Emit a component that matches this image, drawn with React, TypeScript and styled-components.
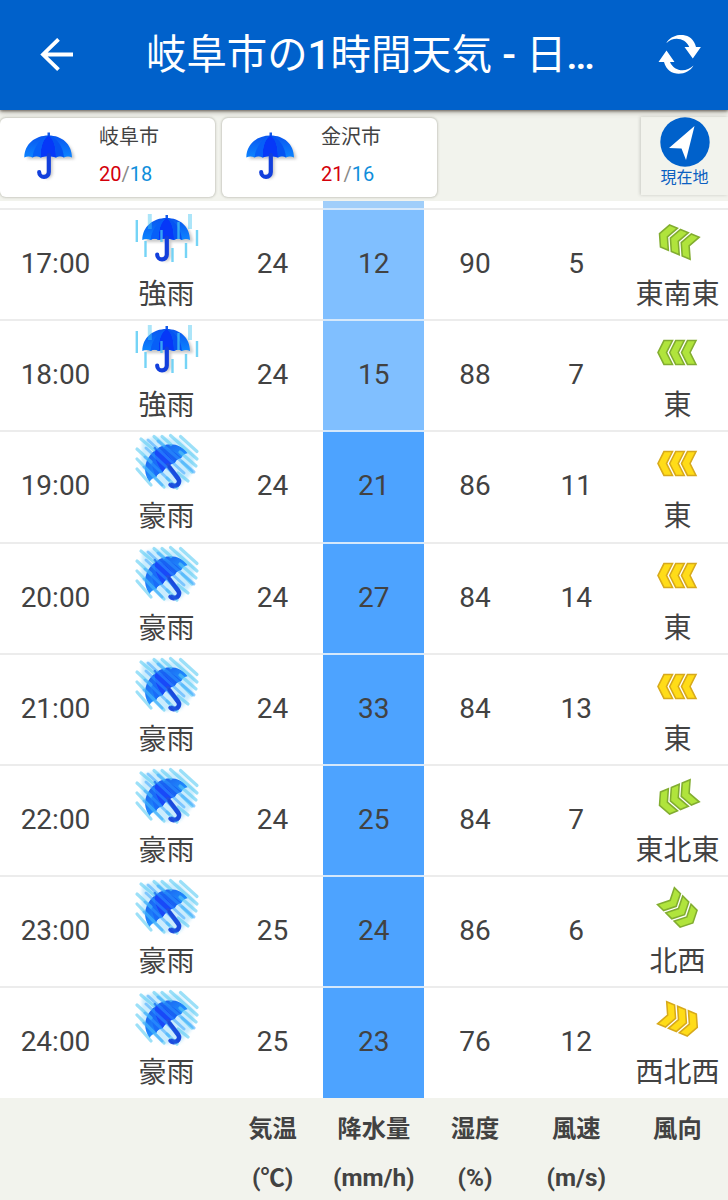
import React from "react";
import styled, { createGlobalStyle } from "styled-components";

const GlobalStyle = createGlobalStyle`
  * { box-sizing: border-box; }
  body {
    margin: 0;
    background: #f2f3ed;
    color: #424242;
    font-family: Roboto, "Noto Sans CJK JP", sans-serif;
  }
`;

const Page = styled.div`
  display: flex;
  flex-direction: column;
  width: 728px;
  height: 1200px;
  overflow: hidden;
`;

const TopBar = styled.header`
  display: flex;
  align-items: center;
  flex: none;
  height: 110px;
  padding: 0 26px 0 39px;
  background: #0061cb;
  color: #fff;
  box-shadow: 0 1px 3px rgba(60, 50, 40, 0.7), 0 2px 6px rgba(60, 50, 40, 0.3);
  z-index: 1;

  svg { flex: none; }
`;

const Title = styled.h1`
  flex: 1;
  margin: 2px 0 0 72px;
  font-size: 40.4px;
  line-height: 60px;
  font-weight: 400;
  white-space: nowrap;

  b { font-weight: 500; }
`;

const CityStrip = styled.nav`
  display: flex;
  flex: none;
  gap: 7px;
  height: 91px;
  padding-top: 8px;
`;

const CityCard = styled.section`
  display: flex;
  width: 215px;
  height: 79px;
  padding: 3px 0 0 21px;
  gap: 20px;
  border-radius: 6px;
  background: #fff;
  box-shadow: 0 0 2px 1px rgba(120, 120, 105, 0.3);

  > svg { margin-top: 10px; }
`;

const CityInfo = styled.div`
  font-size: 20px;
  line-height: 32px;
`;

const Temps = styled.div`
  margin-top: 7px;
  line-height: 28px;
  color: #888;
`;

const High = styled.span`color: #d4000b;`;
const Low = styled.span`color: #0f8edb;`;

const LocateButton = styled.button`
  display: flex;
  flex-direction: column;
  align-items: center;
  width: 87px;
  height: 78px;
  margin: -1px 0 0 auto;
  padding: 0;
  border: 0;
  background: #f2f3ed;
  color: #0b60c1;
  font: 400 16px/22px Roboto, "Noto Sans CJK JP", sans-serif;
  box-shadow: -1px 0 3px rgba(90, 90, 80, 0.26);
`;

const columns = "111px 111px repeat(5, 1fr)";

const PreviousRow = styled.div`
  display: grid;
  grid-template-columns: ${columns};
  flex: none;
  height: 7px;
  background: #fff;

  span { grid-column: 4; background: #a0cefa; }
`;

const Row = styled.div`
  display: grid;
  grid-template-columns: ${columns};
  flex: none;
  height: 111.2px;
  background: #fff;
  font-size: 28px;
  text-align: center;
`;

const Cell = styled.div<{ $fill?: string }>`
  display: flex;
  align-items: center;
  justify-content: center;
  padding-bottom: 3px;
  border-top: 2px solid #ececec;
  background: ${(p) => p.$fill ?? "#fff"};
  ${(p) => p.$fill && "border-top-color: #d5e8fb;"}
`;

const IconCell = styled(Cell)`
  flex-direction: column;
  justify-content: flex-start;
  white-space: nowrap;
  line-height: 45px;
`;

const IconBox = styled.div`
  display: flex;
  align-items: center;
  justify-content: center;
  flex: none;
  width: 66px;
  height: 62px;
`;

const Units = styled.footer`
  display: grid;
  grid-template-columns: ${columns};
  flex: 1;
  background: #f2f3ed;
  font-size: 24.3px;
  font-weight: 700;
  line-height: 49px;
  text-align: center;
`;

const Unit = styled.div`
  padding-top: 6px;
  white-space: nowrap;

  span { display: block; }
`;

const Canopy = () => (
  <g>
    <path d="M24 1.500h2.500v5H24z" fill="#155be8" />
    <path d="M.8 26.500C1 13 11.500 4.500 25 4.500S48.300 13 48.500 26.500q-4-2-8 0-4-2.500-8 0-8-3-15.500 0-4-2.500-8 0-4-2-8.200 0Z" fill="url(#canopy)" />
    <path d="M17 26.500C17 14 20.500 7 25 4.500c4.500 2.500 7.500 9.500 7.500 22q-8-3-15.500 0Z" fill="#0638f8" />
    <path d="M9 26.500C10.500 14 18.500 7 25 4.500 19.500 8 17 16 17 26.500q-4-2.500-8 0Z" fill="#075ff8" />
    <path d="M25 4.500c9.500 3.500 14.500 11 15.500 22q-4-2.500-8 0C32.500 16 30.500 9 25 4.500Z" fill="#0553f2" />
    <path d="M25.300 24v17a4.800 4.800 0 0 1-9.600.2" fill="none" stroke="#123fdc" strokeWidth="4.200" strokeLinecap="round" />
  </g>
);

const Umbrella = () => (
  <svg width="58" height="52" viewBox="-2.500 0 58 52">
    <defs>
      <linearGradient id="canopy" x1="0" y1="0" x2="0" y2="1">
        <stop offset="0" stopColor="#0a55ef" />
        <stop offset="1" stopColor="#0c84ff" />
      </linearGradient>
      <filter id="soft" x="-20%" y="-20%" width="150%" height="150%">
        <feGaussianBlur stdDeviation="1.4" />
      </filter>
    </defs>
    <path d="M4 28C4 15 13 8 27 8s22 7 24 20H29v15q-3 8-10 2l6-3V28Z" fill="#777" opacity=".42" filter="url(#soft)" />
    <Canopy />
  </svg>
);

const HeavyRain = () => (
  <svg width="66" height="56" viewBox="0 0 66 56">
    <path d="M12 29C12 16 21 8 35 8s22 7 24 21H37v15q-3 8-10 2l6-3V29Z" fill="#777" opacity=".4" filter="url(#soft)" />
    <g transform="translate(7.500 .5)"><Canopy /></g>
    <g stroke="#48c6f4" strokeWidth="2.400" opacity=".75">
      <path d="M2.800 7v22M63 17v16M11.500 28v16M52 30v15M27.500 17v12M44.500 9v17M38.500 35v14" />
      <path d="M15.800 1v15M56 1v15" opacity=".6" strokeWidth="4" />
    </g>
  </svg>
);

const Downpour = () => (
  <svg width="66" height="62" viewBox="0 0 66 62">
    <path d="m8 9 12-4 26 2 15 16-3 18-12 14-16 1L7 35Z" fill="#a9e0fc" opacity=".6" filter="url(#soft)" />
    <g transform="translate(9.600 8.800) rotate(-37 25.200 26)" opacity=".9">
      <Canopy />
    </g>
    <g strokeLinecap="round" fill="none">
      <path
        d="m46.500 4.500 16.500 15M36.500 3.500 63 27M28 4.500l9 8M46 20l16 14M20 4.500l10 9M48 30l10 10M7 7l13 11M44 41l10 8M3 17l14 13M33 46l10 10M3 27l27 28M3 37l14 16"
        stroke="#5acbf4" strokeWidth="3.200" opacity=".6"
      />
      <path
        d="m24 9 36 31M14 8l36 33M12 16l32 30M11 25l24 23M10 35l18 18"
        stroke="#2ea0ff" strokeWidth="3" opacity=".5"
      />
    </g>
    <path d="m35.500 35 9 11.500a4.500 4.500 0 0 1-6.500 6" fill="none" stroke="#1648dc" strokeWidth="4" strokeLinecap="round" opacity=".85" />
  </svg>
);

const WindArrow = ({ angle, strong }: { angle: number; strong: boolean }) => (
  <svg width="48" height="48" viewBox="-24 -24.500 48 48">
    <g
      transform={`translate(1.400 0) rotate(${angle}) translate(-2 0) scale(.98)`}
      fill={strong ? "#ffdc18" : "#b0e43c"}
      stroke={strong ? "#d7a91b" : "#82ad30"}
      strokeWidth="1.600"
    >
      <path d="M-12.700-12.200h8.700L-10.100 0l6.100 12.200h-8.700L-18.800 0Z" />
      <path d="M-.7-12.200H8L1.900 0 8 12.200H-.7L-6.800 0Z" />
      <path d="M11.300-12.200H20L13.900 0 20 12.200h-8.700L5.200 0Z" />
    </g>
  </svg>
);

interface Hour {
  time: string;
  sky: string;
  temp: number;
  rain: number;
  humidity: number;
  speed: number;
  wind: string;
  angle: number;
}

const hours: Hour[] = [
  { time: "17:00", sky: "強雨", temp: 24, rain: 12, humidity: 90, speed: 5, wind: "東南東", angle: 22.5 },
  { time: "18:00", sky: "強雨", temp: 24, rain: 15, humidity: 88, speed: 7, wind: "東", angle: 0 },
  { time: "19:00", sky: "豪雨", temp: 24, rain: 21, humidity: 86, speed: 11, wind: "東", angle: 0 },
  { time: "20:00", sky: "豪雨", temp: 24, rain: 27, humidity: 84, speed: 14, wind: "東", angle: 0 },
  { time: "21:00", sky: "豪雨", temp: 24, rain: 33, humidity: 84, speed: 13, wind: "東", angle: 0 },
  { time: "22:00", sky: "豪雨", temp: 24, rain: 25, humidity: 84, speed: 7, wind: "東北東", angle: -22.5 },
  { time: "23:00", sky: "豪雨", temp: 25, rain: 24, humidity: 86, speed: 6, wind: "北西", angle: 225 },
  { time: "24:00", sky: "豪雨", temp: 25, rain: 23, humidity: 76, speed: 12, wind: "西北西", angle: 202.5 },
];

const cities = [
  { name: "岐阜市", high: 20, low: 18 },
  { name: "金沢市", high: 21, low: 16 },
];

const units = [
  ["気温", "(℃)"],
  ["降水量", "(mm/h)"],
  ["湿度", "(%)"],
  ["風速", "(m/s)"],
  ["風向", ""],
];

export default function App() {
  return (
    <Page>
      <GlobalStyle />
      <TopBar>
        <svg width="35" height="34" viewBox="0 0 35 34" fill="none" stroke="#fff" strokeWidth="3.800">
          <path d="M34 16.500H4M19.500 1.300 4 16.500l15.500 15.200" />
        </svg>
        <Title>岐阜市の<b>1</b>時間天気 <b>-</b> 日<b>…</b></Title>
        <svg width="44" height="40" viewBox="0 0 44 40" fill="#fff">
          <path d="M8.300 8.200C14-2.500 34-4.500 38 12h4.900L34.800 23.500 26.500 12h4.700C27.500 3 15.500 1 8.300 8.200Z" />
          <path d="M35.500 30.500C30 41 10 43 6 27H.5L8.500 15.500l8 11.500h-4.500C16 36.500 28 38 35.500 30.500Z" />
        </svg>
      </TopBar>
      <CityStrip>
        {cities.map((c) => (
          <CityCard key={c.name}>
            <Umbrella />
            <CityInfo>
              {c.name}
              <Temps>
                <High>{c.high}</High>/<Low>{c.low}</Low>
              </Temps>
            </CityInfo>
          </CityCard>
        ))}
        <LocateButton>
          <svg width="50" height="50" viewBox="0 0 50 50">
            <circle cx="25" cy="25" r="24.700" fill="#0061cb" />
            <path d="M34.500 9 26 43l-4.500-11.500L9 31Z" fill="#fff" />
          </svg>
          現在地
        </LocateButton>
      </CityStrip>
      <PreviousRow><span /></PreviousRow>
      {hours.map((h) => (
        <Row key={h.time}>
          <Cell>{h.time}</Cell>
          <IconCell>
            <IconBox>{h.sky === "強雨" ? <HeavyRain /> : <Downpour />}</IconBox>
            {h.sky}
          </IconCell>
          <Cell>{h.temp}</Cell>
          <Cell $fill={h.rain > 20 ? "#4da3ff" : "#80bfff"}>{h.rain}</Cell>
          <Cell>{h.humidity}</Cell>
          <Cell>{h.speed}</Cell>
          <IconCell>
            <IconBox><WindArrow angle={h.angle} strong={h.speed > 10} /></IconBox>
            {h.wind}
          </IconCell>
        </Row>
      ))}
      <Units>
        <div />
        <div />
        {units.map(([name, unit]) => (
          <Unit key={name}>
            <span>{name}</span>
            <span>{unit}</span>
          </Unit>
        ))}
      </Units>
    </Page>
  );
}
